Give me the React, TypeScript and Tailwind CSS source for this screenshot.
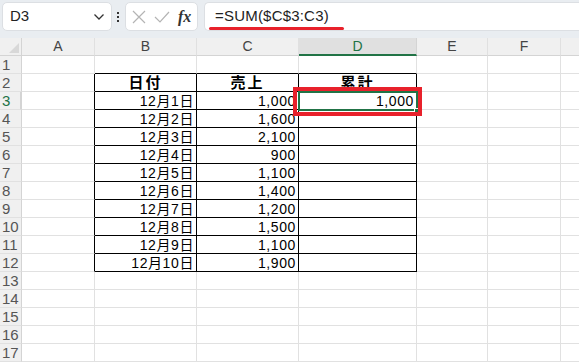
import React from "react";

const COLS = [
  { key: "A", w: 73 },
  { key: "B", w: 102 },
  { key: "C", w: 102 },
  { key: "D", w: 118 },
  { key: "E", w: 71 },
  { key: "F", w: 73 },
  { key: "G", w: 60 },
];

const sales = [1000, 1600, 2100, 900, 1100, 1400, 1200, 1500, 1100, 1900];

const fmt = (n: number) => n.toLocaleString("en-US");

const CELL_FONT = '"Liberation Sans", "Noto Sans CJK JP", sans-serif';

function cellText(row: number, col: string): string {
  if (row === 2) {
    if (col === "B") return "日付";
    if (col === "C") return "売上";
    if (col === "D") return "累計";
  }
  if (row >= 3 && row <= 12) {
    const i = row - 3;
    if (col === "B") return `12月${i + 1}日`;
    if (col === "C") return fmt(sales[i]);
    if (col === "D" && row === 3) return fmt(1000);
  }
  return "";
}

const inTable = (row: number, col: string) =>
  row >= 2 && row <= 12 && (col === "B" || col === "C" || col === "D");

function Cell({ row, col, w }: { row: number; col: string; w: number }) {
  const table = inTable(row, col);
  // right border black if this cell or the next one is part of the table
  const rightBlack = table || (col === "A" && row >= 2 && row <= 12);
  const bottomBlack = table || (row === 1 && (col === "B" || col === "C" || col === "D"));
  const text = cellText(row, col);
  const header = row === 2 && table;
  return (
    <div
      style={{ width: w, fontFamily: CELL_FONT }}
      className={`h-[18px] shrink-0 border-r border-b flex items-center px-[2px] leading-none text-black whitespace-nowrap ${
        rightBlack ? "border-r-black" : "border-r-[#e1e1e1]"
      } ${bottomBlack ? "border-b-black" : "border-b-[#e1e1e1]"} ${
        header
          ? "justify-center font-bold text-[15px] tracking-[2px]"
          : "justify-end text-[14px] tracking-[0.6px]"
      }`}
    >
      {text}
    </div>
  );
}

export default function App() {
  const rows = Array.from({ length: 17 }, (_, i) => i + 1);
  return (
    <div
      className="w-[579px] h-[362px] overflow-hidden bg-white relative"
      style={{ fontFamily: '"Liberation Sans", "Noto Sans CJK JP", sans-serif' }}
    >
      {/* formula bar */}
      <div className="h-[38px] bg-[#e9edf1] flex items-start pt-[2px] pl-[2px]">
        <div className="w-[110px] h-[29px] bg-white border border-[#dcdfe3] rounded-[5px] flex items-center justify-between pl-[7px] pr-[6px]">
          <span className="text-[15px] text-[#222]">D3</span>
          <svg width="12" height="8" viewBox="0 0 12 8">
            <path d="M1.5 1.5 L6 6 L10.5 1.5" fill="none" stroke="#333" strokeWidth="1.3" />
          </svg>
        </div>
        <div className="w-[12px] h-[29px] flex flex-col items-center justify-center gap-[2px]">
          <div className="w-[2px] h-[2px] bg-[#333]" />
          <div className="w-[2px] h-[2px] bg-[#333]" />
          <div className="w-[2px] h-[2px] bg-[#333]" />
        </div>
        <div className="ml-[1px] w-[73px] h-[29px] bg-white border border-[#dcdfe3] rounded-[5px] flex items-center pl-[6px] gap-[8px]">
          <svg width="14" height="14" viewBox="0 0 14 14">
            <path d="M1 1 L13 13 M13 1 L1 13" stroke="#b4b4b4" strokeWidth="1.2" fill="none" />
          </svg>
          <svg width="16" height="14" viewBox="0 0 16 14">
            <path d="M1 7 L6 12 L15 2" stroke="#b4b4b4" strokeWidth="1.2" fill="none" />
          </svg>
          <span
            className="italic text-[16px] text-[#333] font-bold leading-none"
            style={{ fontFamily: '"Liberation Serif", serif' }}
          >
            fx
          </span>
        </div>
        <div className="ml-[6px] flex-1 h-[29px] bg-white border border-[#dcdfe3] border-r-0 rounded-l-[5px] relative flex items-center pl-[10px]">
          <span className="text-[15px] text-[#222] tracking-[0.2px]">=SUM($C$3:C3)</span>
          <div className="absolute left-[4px] top-[24px] w-[135px] h-[3px] rounded-full bg-[#e8212b]" />
        </div>
      </div>

      {/* column headers */}
      <div className="flex h-[18px]">
        <div className="w-[22px] shrink-0 h-full bg-[#f0f0f0] border-r border-b border-[#d4d4d4] relative">
          <svg className="absolute right-[2px] bottom-[2px]" width="10" height="10" viewBox="0 0 10 10">
            <path d="M10 0 L10 10 L0 10 Z" fill="#d8d8d8" />
          </svg>
        </div>
        {COLS.map((c) => (
          <div
            key={c.key}
            style={{ width: c.w }}
            className={`shrink-0 h-full flex items-center justify-center text-[14px] border-r ${
              c.key === "D"
                ? "bg-[#e0e0e0] text-[#217346] border-b-2 border-b-[#217346] border-r-[#d4d4d4]"
                : "bg-[#f0f0f0] text-[#444] border-b border-b-[#d4d4d4] border-r-[#e0e0e0]"
            }`}
          >
            {c.key === "G" ? "" : c.key}
          </div>
        ))}
      </div>

      {/* grid rows */}
      {rows.map((r) => (
        <div key={r} className="flex">
          <div
            className={`w-[22px] shrink-0 h-[18px] flex items-center pl-[2px] text-[15px] leading-none bg-[#f0f0f0] border-b border-r border-b-[#e1e1e1] border-r-[#d4d4d4] ${
              r === 3 ? "text-[#217346] border-r-2 border-r-[#217346]" : "text-[#555]"
            }`}
          >
            {r}
          </div>
          {COLS.map((c) => (
            <Cell key={c.key} row={r} col={c.key} w={c.w} />
          ))}
        </div>
      ))}

      {/* active cell D3 selection + red highlight */}
      <div className="absolute left-[298px] top-[91px] w-[120px] h-[20px] border-2 border-[#217346] pointer-events-none" />
      <div className="absolute left-[414px] top-[108px] w-[5px] h-[5px] bg-[#217346] border border-white" />
      <div className="absolute left-[293px] top-[87px] w-[129px] h-[29px] border-[4px] border-[#e8212b] pointer-events-none" />
    </div>
  );
}
